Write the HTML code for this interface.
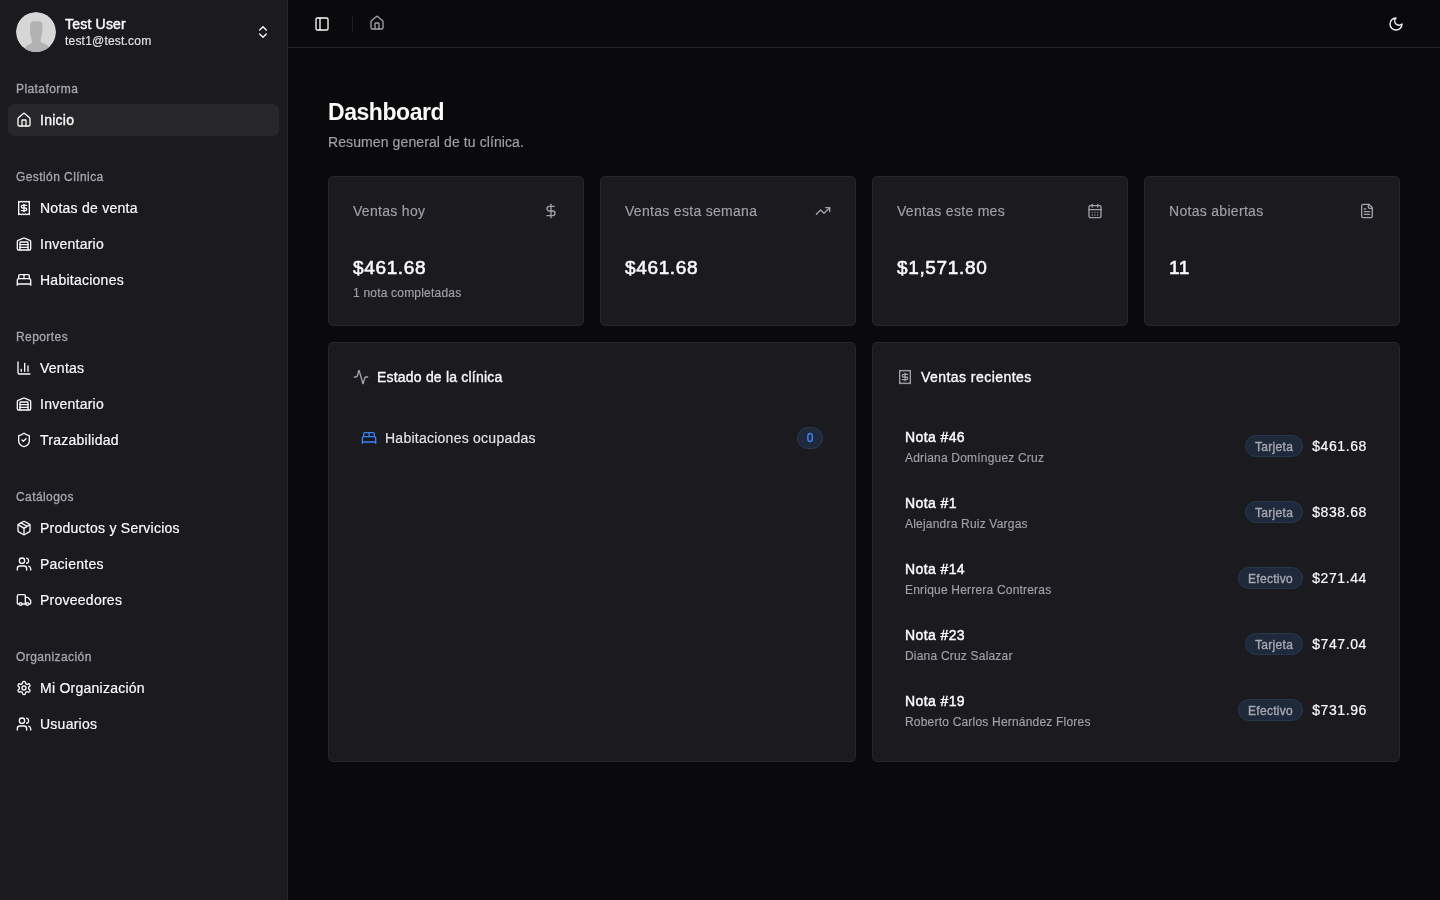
<!DOCTYPE html>
<html><head><meta charset="utf-8"><title>Dashboard</title>
<style>
*{margin:0;padding:0;box-sizing:border-box}
html,body{width:1440px;height:900px;overflow:hidden;background:#0a0a0c;-webkit-font-smoothing:antialiased;font-family:"Liberation Sans",sans-serif;}
.t{position:absolute;white-space:nowrap;will-change:transform}
.t.right{transform:translateX(-100%)}
.bold{font-weight:bold}
.ic{position:absolute;display:block}
.sidebar{position:absolute;left:0;top:0;width:288px;height:900px;background:#1b1a1f;border-right:1px solid #27272a}
.avatar{position:absolute;left:16px;top:12px;width:40px;height:40px;border-radius:50%;overflow:hidden}
.avatar svg{display:block}
.active{position:absolute;left:8px;top:104px;width:271px;height:32px;border-radius:6px;background:#27272a}
.hdr{position:absolute;left:288px;top:47px;width:1152px;height:1px;background:#27272a}
.sep{position:absolute;left:352px;top:16px;width:1px;height:16px;background:#1f1f23}
.card{position:absolute;background:#1b1a1f;border:1px solid #27272a;border-radius:5px}
.badge0{position:absolute;left:797px;top:427px;width:26px;height:22px;border-radius:11px;background:#1e293b;border:1px solid #2b3a52;color:#3b82f6;font-size:12px;line-height:21px;text-align:center;-webkit-text-stroke:0.45px #3b82f6;will-change:transform}
.pill{position:absolute;right:137px;height:22px;padding:0 9px;border-radius:11px;background:#1e293b;border:1px solid #283750;color:#a8a8b0;font-size:12px;line-height:20px;padding-top:1px;letter-spacing:0.3px;-webkit-text-stroke:0.35px #a8a8b0;will-change:transform}
</style></head><body>
<div class="sidebar"></div>
<div class="avatar"><svg width="40" height="40" viewBox="0 0 40 40"><defs><pattern id="dots" width="2" height="2" patternUnits="userSpaceOnUse"><rect width="2" height="2" fill="#dcdcdc"/><circle cx="1" cy="1" r="0.55" fill="#c4c4c4"/></pattern></defs><circle cx="20" cy="20" r="20" fill="url(#dots)"/><path d="M14.2 12.5 Q14.8 9.4 18 9.3 L23.2 9.3 Q26.2 9.5 26.3 12.8 L26.5 18.5 Q26.9 20.3 25.9 21.2 L25.3 24.5 L24.6 29.8 L31 33 Q33.2 34.3 33.6 37.5 L34 41 L8 41 L8.6 37.5 Q9 35 10.8 33.8 L15.9 31 L15.7 27.5 Q14.3 24 13.9 20.5 Z" fill="#b2b2b2"/></svg></div>
<div class="t " style="left:65px;top:17.15px;font-size:14px;line-height:14px;color:#fafafa;-webkit-text-stroke:0.45px #fafafa;letter-spacing:0.2px">Test User</div>
<div class="t " style="left:65px;top:35.34px;font-size:12px;line-height:12px;color:#e4e4e7;-webkit-text-stroke:0.15px #e4e4e7;letter-spacing:0.2px">test1@test.com</div>
<svg class="ic" style="left:255px;top:24px;width:16px;height:16px" viewBox="0 0 24 24" fill="none" stroke="#fafafa" stroke-width="2" stroke-linecap="round" stroke-linejoin="round"><path d="m7 15 5 5 5-5"/><path d="m7 9 5-5 5 5"/></svg>
<div class="active"></div>
<div class="t " style="left:16px;top:83.04px;font-size:12px;line-height:12px;color:#a6a6ae;-webkit-text-stroke:0.3px #a6a6ae;letter-spacing:0.42px">Plataforma</div>
<div class="t " style="left:16px;top:171.04px;font-size:12px;line-height:12px;color:#a6a6ae;-webkit-text-stroke:0.3px #a6a6ae;letter-spacing:0.42px">Gestión Clínica</div>
<div class="t " style="left:16px;top:331.04px;font-size:12px;line-height:12px;color:#a6a6ae;-webkit-text-stroke:0.3px #a6a6ae;letter-spacing:0.42px">Reportes</div>
<div class="t " style="left:16px;top:491.04px;font-size:12px;line-height:12px;color:#a6a6ae;-webkit-text-stroke:0.3px #a6a6ae;letter-spacing:0.42px">Catálogos</div>
<div class="t " style="left:16px;top:651.04px;font-size:12px;line-height:12px;color:#a6a6ae;-webkit-text-stroke:0.3px #a6a6ae;letter-spacing:0.42px">Organización</div>
<svg class="ic" style="left:16px;top:112px;width:16px;height:16px" viewBox="0 0 24 24" fill="none" stroke="#fafafa" stroke-width="2" stroke-linecap="round" stroke-linejoin="round"><path d="M15 21v-8a1 1 0 0 0-1-1h-4a1 1 0 0 0-1 1v8"/><path d="M3 10a2 2 0 0 1 .709-1.528l7-5.999a2 2 0 0 1 2.582 0l7 5.999A2 2 0 0 1 21 10v9a2 2 0 0 1-2 2H5a2 2 0 0 1-2-2z"/></svg>
<div class="t " style="left:40px;top:113.15px;font-size:14px;line-height:14px;color:#fafafa;-webkit-text-stroke:0.35px #fafafa;letter-spacing:0.25px">Inicio</div>
<svg class="ic" style="left:16px;top:200px;width:16px;height:16px" viewBox="0 0 24 24" fill="none" stroke="#fafafa" stroke-width="2" stroke-linecap="round" stroke-linejoin="round"><path d="M4 2v20l2-1 2 1 2-1 2 1 2-1 2 1 2-1 2 1V2l-2 1-2-1-2 1-2-1-2 1-2-1-2 1Z"/><path d="M16 8h-6a2 2 0 1 0 0 4h4a2 2 0 1 1 0 4H8"/><path d="M12 17.5v-11"/></svg>
<div class="t " style="left:40px;top:201.15px;font-size:14px;line-height:14px;color:#fafafa;-webkit-text-stroke:0.2px #fafafa;letter-spacing:0.25px">Notas de venta</div>
<svg class="ic" style="left:16px;top:236px;width:16px;height:16px" viewBox="0 0 24 24" fill="none" stroke="#fafafa" stroke-width="2" stroke-linecap="round" stroke-linejoin="round"><path d="M18 21V10a1 1 0 0 0-1-1H7a1 1 0 0 0-1 1v11"/><path d="M22 19a2 2 0 0 1-2 2H4a2 2 0 0 1-2-2V8.35a2 2 0 0 1 1.26-1.86l8-3.2a2 2 0 0 1 1.48 0l8 3.2A2 2 0 0 1 22 8.35Z"/><path d="M6 13h12"/><path d="M6 17h12"/></svg>
<div class="t " style="left:40px;top:237.15px;font-size:14px;line-height:14px;color:#fafafa;-webkit-text-stroke:0.2px #fafafa;letter-spacing:0.25px">Inventario</div>
<svg class="ic" style="left:16px;top:272px;width:16px;height:16px" viewBox="0 0 24 24" fill="none" stroke="#fafafa" stroke-width="2" stroke-linecap="round" stroke-linejoin="round"><path d="M2 20v-8a2 2 0 0 1 2-2h16a2 2 0 0 1 2 2v8"/><path d="M4 10V6a2 2 0 0 1 2-2h12a2 2 0 0 1 2 2v4"/><path d="M12 4v6"/><path d="M2 18h20"/></svg>
<div class="t " style="left:40px;top:273.15px;font-size:14px;line-height:14px;color:#fafafa;-webkit-text-stroke:0.2px #fafafa;letter-spacing:0.25px">Habitaciones</div>
<svg class="ic" style="left:16px;top:360px;width:16px;height:16px" viewBox="0 0 24 24" fill="none" stroke="#fafafa" stroke-width="2" stroke-linecap="round" stroke-linejoin="round"><path d="M3 3v16a2 2 0 0 0 2 2h16"/><path d="M18 17V9"/><path d="M13 17V5"/><path d="M8 17v-3"/></svg>
<div class="t " style="left:40px;top:361.15px;font-size:14px;line-height:14px;color:#fafafa;-webkit-text-stroke:0.2px #fafafa;letter-spacing:0.25px">Ventas</div>
<svg class="ic" style="left:16px;top:396px;width:16px;height:16px" viewBox="0 0 24 24" fill="none" stroke="#fafafa" stroke-width="2" stroke-linecap="round" stroke-linejoin="round"><path d="M18 21V10a1 1 0 0 0-1-1H7a1 1 0 0 0-1 1v11"/><path d="M22 19a2 2 0 0 1-2 2H4a2 2 0 0 1-2-2V8.35a2 2 0 0 1 1.26-1.86l8-3.2a2 2 0 0 1 1.48 0l8 3.2A2 2 0 0 1 22 8.35Z"/><path d="M6 13h12"/><path d="M6 17h12"/></svg>
<div class="t " style="left:40px;top:397.15px;font-size:14px;line-height:14px;color:#fafafa;-webkit-text-stroke:0.2px #fafafa;letter-spacing:0.25px">Inventario</div>
<svg class="ic" style="left:16px;top:432px;width:16px;height:16px" viewBox="0 0 24 24" fill="none" stroke="#fafafa" stroke-width="2" stroke-linecap="round" stroke-linejoin="round"><path d="M20 13c0 5-3.5 7.5-7.66 8.95a1 1 0 0 1-.67-.01C7.5 20.5 4 18 4 13V6a1 1 0 0 1 1-1c2 0 4.5-1.2 6.24-2.72a1.17 1.17 0 0 1 1.52 0C14.51 3.81 17 5 19 5a1 1 0 0 1 1 1z"/><path d="m9 12 2 2 4-4"/></svg>
<div class="t " style="left:40px;top:433.15px;font-size:14px;line-height:14px;color:#fafafa;-webkit-text-stroke:0.2px #fafafa;letter-spacing:0.25px">Trazabilidad</div>
<svg class="ic" style="left:16px;top:520px;width:16px;height:16px" viewBox="0 0 24 24" fill="none" stroke="#fafafa" stroke-width="2" stroke-linecap="round" stroke-linejoin="round"><path d="M11 21.73a2 2 0 0 0 2 0l7-4A2 2 0 0 0 21 16V8a2 2 0 0 0-1-1.73l-7-4a2 2 0 0 0-2 0l-7 4A2 2 0 0 0 3 8v8a2 2 0 0 0 1 1.73z"/><path d="M12 22V12"/><path d="m3.3 7 7.703 4.734a2 2 0 0 0 1.994 0L20.7 7"/><path d="m7.5 4.27 9 5.15"/></svg>
<div class="t " style="left:40px;top:521.15px;font-size:14px;line-height:14px;color:#fafafa;-webkit-text-stroke:0.2px #fafafa;letter-spacing:0.25px">Productos y Servicios</div>
<svg class="ic" style="left:16px;top:556px;width:16px;height:16px" viewBox="0 0 24 24" fill="none" stroke="#fafafa" stroke-width="2" stroke-linecap="round" stroke-linejoin="round"><path d="M16 21v-2a4 4 0 0 0-4-4H6a4 4 0 0 0-4 4v2"/><circle cx="9" cy="7" r="4"/><path d="M22 21v-2a4 4 0 0 0-3-3.87"/><path d="M16 3.13a4 4 0 0 1 0 7.75"/></svg>
<div class="t " style="left:40px;top:557.15px;font-size:14px;line-height:14px;color:#fafafa;-webkit-text-stroke:0.2px #fafafa;letter-spacing:0.25px">Pacientes</div>
<svg class="ic" style="left:16px;top:592px;width:16px;height:16px" viewBox="0 0 24 24" fill="none" stroke="#fafafa" stroke-width="2" stroke-linecap="round" stroke-linejoin="round"><path d="M14 18V6a2 2 0 0 0-2-2H4a2 2 0 0 0-2 2v11a1 1 0 0 0 1 1h2"/><path d="M15 18H9"/><path d="M19 18h2a1 1 0 0 0 1-1v-3.65a1 1 0 0 0-.22-.624l-3.48-4.35A1 1 0 0 0 17.52 8H14"/><circle cx="17" cy="18" r="2"/><circle cx="7" cy="18" r="2"/></svg>
<div class="t " style="left:40px;top:593.15px;font-size:14px;line-height:14px;color:#fafafa;-webkit-text-stroke:0.2px #fafafa;letter-spacing:0.25px">Proveedores</div>
<svg class="ic" style="left:16px;top:680px;width:16px;height:16px" viewBox="0 0 24 24" fill="none" stroke="#fafafa" stroke-width="2" stroke-linecap="round" stroke-linejoin="round"><path d="M12.22 2h-.44a2 2 0 0 0-2 2v.18a2 2 0 0 1-1 1.73l-.43.25a2 2 0 0 1-2 0l-.15-.08a2 2 0 0 0-2.73.73l-.22.38a2 2 0 0 0 .73 2.73l.15.1a2 2 0 0 1 1 1.72v.51a2 2 0 0 1-1 1.74l-.15.09a2 2 0 0 0-.73 2.73l.22.38a2 2 0 0 0 2.73.73l.15-.08a2 2 0 0 1 2 0l.43.25a2 2 0 0 1 1 1.73V20a2 2 0 0 0 2 2h.44a2 2 0 0 0 2-2v-.18a2 2 0 0 1 1-1.73l.43-.25a2 2 0 0 1 2 0l.15.08a2 2 0 0 0 2.730-.73l.22-.39a2 2 0 0 0-.73-2.73l-.15-.08a2 2 0 0 1-1-1.74v-.5a2 2 0 0 1 1-1.74l.15-.09a2 2 0 0 0 .73-2.73l-.22-.38a2 2 0 0 0-2.73-.73l-.15.08a2 2 0 0 1-2 0l-.43-.25a2 2 0 0 1-1-1.73V4a2 2 0 0 0-2-2z"/><circle cx="12" cy="12" r="3"/></svg>
<div class="t " style="left:40px;top:681.15px;font-size:14px;line-height:14px;color:#fafafa;-webkit-text-stroke:0.2px #fafafa;letter-spacing:0.25px">Mi Organización</div>
<svg class="ic" style="left:16px;top:716px;width:16px;height:16px" viewBox="0 0 24 24" fill="none" stroke="#fafafa" stroke-width="2" stroke-linecap="round" stroke-linejoin="round"><path d="M16 21v-2a4 4 0 0 0-4-4H6a4 4 0 0 0-4 4v2"/><circle cx="9" cy="7" r="4"/><path d="M22 21v-2a4 4 0 0 0-3-3.87"/><path d="M16 3.13a4 4 0 0 1 0 7.75"/></svg>
<div class="t " style="left:40px;top:717.15px;font-size:14px;line-height:14px;color:#fafafa;-webkit-text-stroke:0.2px #fafafa;letter-spacing:0.25px">Usuarios</div>
<div class="hdr"></div>
<svg class="ic" style="left:314px;top:16px;width:16px;height:16px" viewBox="0 0 24 24" fill="none" stroke="#fafafa" stroke-width="2" stroke-linecap="round" stroke-linejoin="round"><rect width="18" height="18" x="3" y="3" rx="2"/><path d="M9 3v18"/></svg>
<div class="sep"></div>
<svg class="ic" style="left:369px;top:15px;width:16px;height:16px" viewBox="0 0 24 24" fill="none" stroke="#a1a1aa" stroke-width="2" stroke-linecap="round" stroke-linejoin="round"><path d="M15 21v-8a1 1 0 0 0-1-1h-4a1 1 0 0 0-1 1v8"/><path d="M3 10a2 2 0 0 1 .709-1.528l7-5.999a2 2 0 0 1 2.582 0l7 5.999A2 2 0 0 1 21 10v9a2 2 0 0 1-2 2H5a2 2 0 0 1-2-2z"/></svg>
<svg class="ic" style="left:1388px;top:15.5px;width:16px;height:16px" viewBox="0 0 24 24" fill="none" stroke="#fafafa" stroke-width="2" stroke-linecap="round" stroke-linejoin="round"><path d="M12 3a6 6 0 0 0 9 9 9 9 0 1 1-9-9Z"/></svg>
<div class="t bold" style="left:328px;top:101.33px;font-size:23px;line-height:23px;color:#fafafa;letter-spacing:-0.45px">Dashboard</div>
<div class="t " style="left:328px;top:135.15px;font-size:14px;line-height:14px;color:#a1a1aa;-webkit-text-stroke:0.15px #a1a1aa;letter-spacing:0.1px">Resumen general de tu clínica.</div>
<div class="card" style="left:328px;top:176px;width:256px;height:150px"></div>
<div class="t " style="left:353px;top:204.25px;font-size:14px;line-height:14px;color:#a1a1aa;-webkit-text-stroke:0.15px #a1a1aa;letter-spacing:0.3px">Ventas hoy</div>
<svg class="ic" style="left:543px;top:203px;width:16px;height:16px" viewBox="0 0 24 24" fill="none" stroke="#a1a1aa" stroke-width="2" stroke-linecap="round" stroke-linejoin="round"><line x1="12" x2="12" y1="2" y2="22"/><path d="M17 5H9.5a3.5 3.5 0 0 0 0 7h5a3.5 3.5 0 0 1 0 7H6"/></svg>
<div class="t " style="left:353px;top:258.12px;font-size:19px;line-height:19px;color:#fafafa;-webkit-text-stroke:0.55px #fafafa;letter-spacing:0.65px">$461.68</div>
<div class="t " style="left:353px;top:287.24px;font-size:12px;line-height:12px;color:#a1a1aa;-webkit-text-stroke:0.15px #a1a1aa;letter-spacing:0.2px">1 nota completadas</div>
<div class="card" style="left:600px;top:176px;width:256px;height:150px"></div>
<div class="t " style="left:625px;top:204.25px;font-size:14px;line-height:14px;color:#a1a1aa;-webkit-text-stroke:0.15px #a1a1aa;letter-spacing:0.3px">Ventas esta semana</div>
<svg class="ic" style="left:815px;top:203px;width:16px;height:16px" viewBox="0 0 24 24" fill="none" stroke="#a1a1aa" stroke-width="2" stroke-linecap="round" stroke-linejoin="round"><polyline points="22 7 13.5 15.5 8.5 10.5 2 17"/><polyline points="16 7 22 7 22 13"/></svg>
<div class="t " style="left:625px;top:258.12px;font-size:19px;line-height:19px;color:#fafafa;-webkit-text-stroke:0.55px #fafafa;letter-spacing:0.65px">$461.68</div>
<div class="card" style="left:872px;top:176px;width:256px;height:150px"></div>
<div class="t " style="left:897px;top:204.25px;font-size:14px;line-height:14px;color:#a1a1aa;-webkit-text-stroke:0.15px #a1a1aa;letter-spacing:0.3px">Ventas este mes</div>
<svg class="ic" style="left:1087px;top:203px;width:16px;height:16px" viewBox="0 0 24 24" fill="none" stroke="#a1a1aa" stroke-width="2" stroke-linecap="round" stroke-linejoin="round"><path d="M8 2v4"/><path d="M16 2v4"/><rect width="18" height="18" x="3" y="4" rx="2"/><path d="M3 10h18"/><path d="M8 14h.01"/><path d="M12 14h.01"/><path d="M16 14h.01"/><path d="M8 18h.01"/><path d="M12 18h.01"/><path d="M16 18h.01"/></svg>
<div class="t " style="left:897px;top:258.12px;font-size:19px;line-height:19px;color:#fafafa;-webkit-text-stroke:0.55px #fafafa;letter-spacing:0.65px">$1,571.80</div>
<div class="card" style="left:1144px;top:176px;width:256px;height:150px"></div>
<div class="t " style="left:1169px;top:204.25px;font-size:14px;line-height:14px;color:#a1a1aa;-webkit-text-stroke:0.15px #a1a1aa;letter-spacing:0.3px">Notas abiertas</div>
<svg class="ic" style="left:1359px;top:203px;width:16px;height:16px" viewBox="0 0 24 24" fill="none" stroke="#a1a1aa" stroke-width="2" stroke-linecap="round" stroke-linejoin="round"><path d="M15 2H6a2 2 0 0 0-2 2v16a2 2 0 0 0 2 2h12a2 2 0 0 0 2-2V7Z"/><path d="M14 2v4a2 2 0 0 0 2 2h4"/><path d="M10 9H8"/><path d="M16 13H8"/><path d="M16 17H8"/></svg>
<div class="t " style="left:1169px;top:258.12px;font-size:19px;line-height:19px;color:#fafafa;-webkit-text-stroke:0.55px #fafafa;letter-spacing:0.65px">11</div>
<div class="card" style="left:328px;top:342px;width:528px;height:420px"></div>
<div class="card" style="left:872px;top:342px;width:528px;height:420px"></div>
<svg class="ic" style="left:353px;top:369px;width:16px;height:16px" viewBox="0 0 24 24" fill="none" stroke="#a1a1aa" stroke-width="2" stroke-linecap="round" stroke-linejoin="round"><path d="M22 12h-2.48a2 2 0 0 0-1.93 1.46l-2.350 8.36a.25.25 0 0 1-.48 0L9.24 2.18a.25.25 0 0 0-.48 0l-2.35 8.36A2 2 0 0 1 4.49 12H2"/></svg>
<div class="t " style="left:377px;top:370.15px;font-size:14px;line-height:14px;color:#fafafa;-webkit-text-stroke:0.35px #fafafa;letter-spacing:0.2px">Estado de la clínica</div>
<svg class="ic" style="left:361px;top:430px;width:16px;height:16px" viewBox="0 0 24 24" fill="none" stroke="#3b82f6" stroke-width="2" stroke-linecap="round" stroke-linejoin="round"><path d="M2 20v-8a2 2 0 0 1 2-2h16a2 2 0 0 1 2 2v8"/><path d="M4 10V6a2 2 0 0 1 2-2h12a2 2 0 0 1 2 2v4"/><path d="M12 4v6"/><path d="M2 18h20"/></svg>
<div class="t " style="left:385px;top:431.45px;font-size:14px;line-height:14px;color:#e4e4e7;-webkit-text-stroke:0.15px #e4e4e7;letter-spacing:0.25px">Habitaciones ocupadas</div>
<div class="badge0">0</div>
<svg class="ic" style="left:897px;top:369px;width:16px;height:16px" viewBox="0 0 24 24" fill="none" stroke="#a1a1aa" stroke-width="2" stroke-linecap="round" stroke-linejoin="round"><path d="M4 2v20l2-1 2 1 2-1 2 1 2-1 2 1 2-1 2 1V2l-2 1-2-1-2 1-2-1-2 1-2-1-2 1Z"/><path d="M16 8h-6a2 2 0 1 0 0 4h4a2 2 0 1 1 0 4H8"/><path d="M12 17.5v-11"/></svg>
<div class="t " style="left:921px;top:370.45px;font-size:14px;line-height:14px;color:#fafafa;-webkit-text-stroke:0.35px #fafafa;letter-spacing:0.45px">Ventas recientes</div>
<div class="t " style="left:905px;top:430.15px;font-size:14px;line-height:14px;color:#fafafa;-webkit-text-stroke:0.45px #fafafa;letter-spacing:0.4px">Nota #46</div>
<div class="t " style="left:905px;top:451.84px;font-size:12px;line-height:12px;color:#a1a1aa;-webkit-text-stroke:0.15px #a1a1aa;letter-spacing:0.2px">Adriana Domínguez Cruz</div>
<div class="pill" style="top:435px">Tarjeta</div>
<div class="t right" style="left:1367px;top:439.15px;font-size:14px;line-height:14px;color:#fafafa;-webkit-text-stroke:0.2px #fafafa;letter-spacing:0.6px">$461.68</div>
<div class="t " style="left:905px;top:496.15px;font-size:14px;line-height:14px;color:#fafafa;-webkit-text-stroke:0.45px #fafafa;letter-spacing:0.4px">Nota #1</div>
<div class="t " style="left:905px;top:517.84px;font-size:12px;line-height:12px;color:#a1a1aa;-webkit-text-stroke:0.15px #a1a1aa;letter-spacing:0.2px">Alejandra Ruiz Vargas</div>
<div class="pill" style="top:501px">Tarjeta</div>
<div class="t right" style="left:1367px;top:505.15px;font-size:14px;line-height:14px;color:#fafafa;-webkit-text-stroke:0.2px #fafafa;letter-spacing:0.6px">$838.68</div>
<div class="t " style="left:905px;top:562.15px;font-size:14px;line-height:14px;color:#fafafa;-webkit-text-stroke:0.45px #fafafa;letter-spacing:0.4px">Nota #14</div>
<div class="t " style="left:905px;top:583.84px;font-size:12px;line-height:12px;color:#a1a1aa;-webkit-text-stroke:0.15px #a1a1aa;letter-spacing:0.2px">Enrique Herrera Contreras</div>
<div class="pill" style="top:567px">Efectivo</div>
<div class="t right" style="left:1367px;top:571.15px;font-size:14px;line-height:14px;color:#fafafa;-webkit-text-stroke:0.2px #fafafa;letter-spacing:0.6px">$271.44</div>
<div class="t " style="left:905px;top:628.15px;font-size:14px;line-height:14px;color:#fafafa;-webkit-text-stroke:0.45px #fafafa;letter-spacing:0.4px">Nota #23</div>
<div class="t " style="left:905px;top:649.84px;font-size:12px;line-height:12px;color:#a1a1aa;-webkit-text-stroke:0.15px #a1a1aa;letter-spacing:0.2px">Diana Cruz Salazar</div>
<div class="pill" style="top:633px">Tarjeta</div>
<div class="t right" style="left:1367px;top:637.15px;font-size:14px;line-height:14px;color:#fafafa;-webkit-text-stroke:0.2px #fafafa;letter-spacing:0.6px">$747.04</div>
<div class="t " style="left:905px;top:694.15px;font-size:14px;line-height:14px;color:#fafafa;-webkit-text-stroke:0.45px #fafafa;letter-spacing:0.4px">Nota #19</div>
<div class="t " style="left:905px;top:715.84px;font-size:12px;line-height:12px;color:#a1a1aa;-webkit-text-stroke:0.15px #a1a1aa;letter-spacing:0.2px">Roberto Carlos Hernández Flores</div>
<div class="pill" style="top:699px">Efectivo</div>
<div class="t right" style="left:1367px;top:703.15px;font-size:14px;line-height:14px;color:#fafafa;-webkit-text-stroke:0.2px #fafafa;letter-spacing:0.6px">$731.96</div>
</body></html>
